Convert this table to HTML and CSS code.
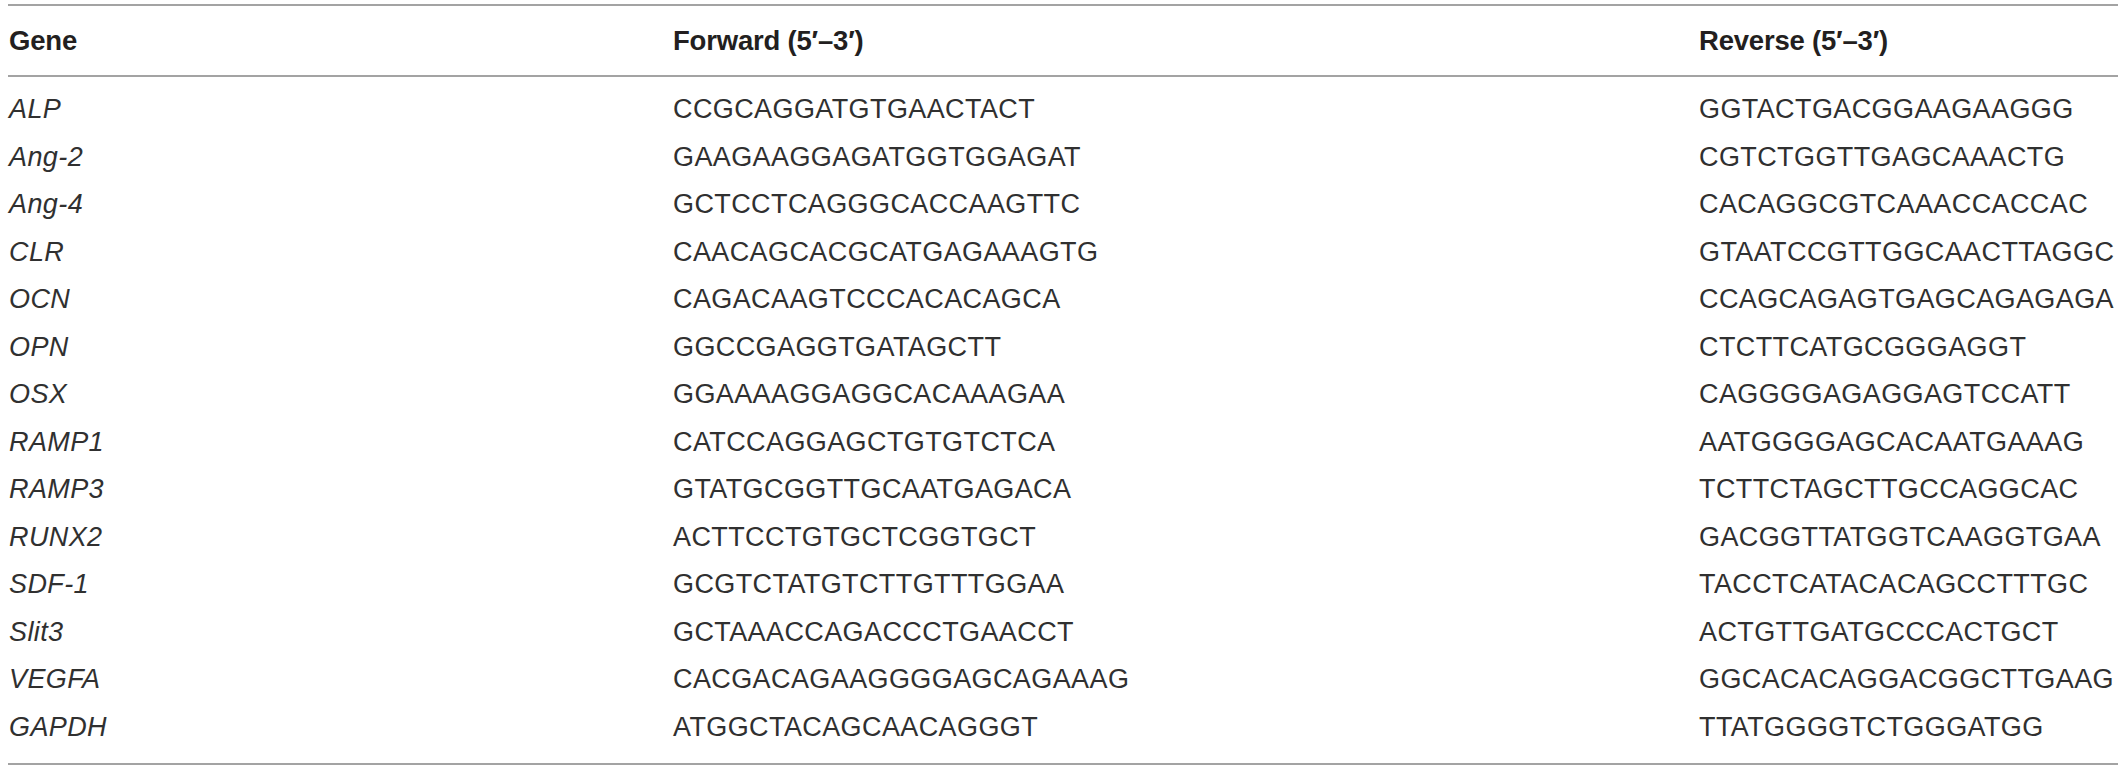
FILE: index.html
```html
<!DOCTYPE html>
<html lang="en">
<head>
<meta charset="utf-8">
<title>Primer sequences</title>
<link rel="stylesheet" href="styles.css">
</head>
<body>
<table class="primers">
  <thead>
    <tr>
      <th class="c-gene">Gene</th>
      <th class="c-fwd">Forward (5′–3′)</th>
      <th class="c-rev">Reverse (5′–3′)</th>
    </tr>
  </thead>
  <tbody>
    <tr><td class="gene">ALP</td><td>CCGCAGGATGTGAACTACT</td><td>GGTACTGACGGAAGAAGGG</td></tr>
    <tr><td class="gene">Ang-2</td><td>GAAGAAGGAGATGGTGGAGAT</td><td>CGTCTGGTTGAGCAAACTG</td></tr>
    <tr><td class="gene">Ang-4</td><td>GCTCCTCAGGGCACCAAGTTC</td><td>CACAGGCGTCAAACCACCAC</td></tr>
    <tr><td class="gene">CLR</td><td>CAACAGCACGCATGAGAAAGTG</td><td>GTAATCCGTTGGCAACTTAGGC</td></tr>
    <tr><td class="gene">OCN</td><td>CAGACAAGTCCCACACAGCA</td><td>CCAGCAGAGTGAGCAGAGAGA</td></tr>
    <tr><td class="gene">OPN</td><td>GGCCGAGGTGATAGCTT</td><td>CTCTTCATGCGGGAGGT</td></tr>
    <tr><td class="gene">OSX</td><td>GGAAAAGGAGGCACAAAGAA</td><td>CAGGGGAGAGGAGTCCATT</td></tr>
    <tr><td class="gene">RAMP1</td><td>CATCCAGGAGCTGTGTCTCA</td><td>AATGGGGAGCACAATGAAAG</td></tr>
    <tr><td class="gene">RAMP3</td><td>GTATGCGGTTGCAATGAGACA</td><td>TCTTCTAGCTTGCCAGGCAC</td></tr>
    <tr><td class="gene">RUNX2</td><td>ACTTCCTGTGCTCGGTGCT</td><td>GACGGTTATGGTCAAGGTGAA</td></tr>
    <tr><td class="gene">SDF-1</td><td>GCGTCTATGTCTTGTTTGGAA</td><td>TACCTCATACACAGCCTTTGC</td></tr>
    <tr><td class="gene">Slit3</td><td>GCTAAACCAGACCCTGAACCT</td><td>ACTGTTGATGCCCACTGCT</td></tr>
    <tr><td class="gene">VEGFA</td><td>CACGACAGAAGGGGAGCAGAAAG</td><td>GGCACACAGGACGGCTTGAAG</td></tr>
    <tr><td class="gene">GAPDH</td><td>ATGGCTACAGCAACAGGGT</td><td>TTATGGGGTCTGGGATGG</td></tr>
  </tbody>
</table>
</body>
</html>
```
FILE: styles.css
```css
html, body {
  background: #ffffff;
}

body {
  margin: 0;
  padding: 4px 5px 0 8px;
}

.primers {
  border-collapse: collapse;
  width: 2107px;
  table-layout: fixed;
  font-family: "Liberation Sans", Arial, Helvetica, sans-serif;
  font-size: 27px;
  letter-spacing: 0.4px;
  color: #231f20;
}

.primers th {
  text-align: left;
  font-weight: bold;
  font-size: 27.5px;
  letter-spacing: -0.2px;
  height: 69px;
  padding: 0 0 0 1px;
  vertical-align: middle;
  border-top: 2px solid #a3a3a3;
  border-bottom: 2px solid #a3a3a3;
}

.c-gene { width: 663px; }
.c-fwd { width: 1025px; }
.c-rev { width: 419px; }

.primers td {
  padding: 0 0 0 1px;
  line-height: 47.5px;
  vertical-align: top;
  white-space: nowrap;
  color: #303030;
}

.primers td.gene {
  font-style: italic;
}

.primers tbody tr:first-child td {
  padding-top: 9px;
}

.primers tbody tr:last-child td {
  padding-bottom: 12px;
  border-bottom: 2px solid #a3a3a3;
}
```
